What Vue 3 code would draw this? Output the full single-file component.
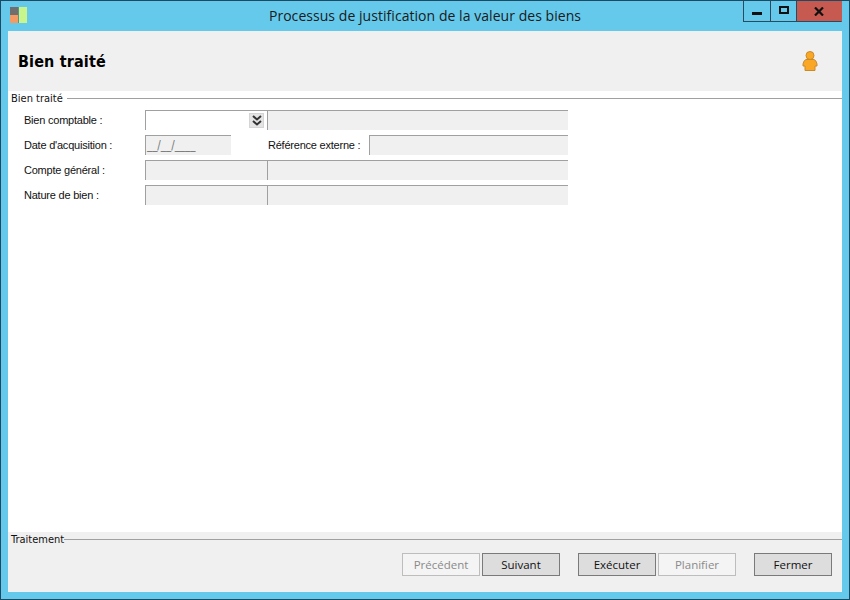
<script setup>
const rows = [
  { label: 'Bien comptable :', key: 'a' },
  { label: "Date d'acquisition :", key: 'b' },
  { label: 'Compte général :', key: 'c' },
  { label: 'Nature de bien :', key: 'd' }
]
</script>

<template>
  <div class="win">
    <div class="titlebar">
      <svg class="appicon" width="17" height="17" viewBox="0 0 17 17">
        <rect x="0" y="0" width="8" height="8" fill="#6f6f6f" />
        <rect x="0" y="8" width="8" height="8" fill="#f59a63" />
        <rect x="8" y="0" width="1" height="16" fill="#5f8f8f" />
        <rect x="9" y="0" width="8" height="16" fill="#c8f58c" />
      </svg>
      <div class="title">Processus de justification de la valeur des biens</div>
      <div class="controls">
        <div class="ctl min"><span class="minbar"></span></div>
        <div class="ctl max"><span class="maxbox"></span></div>
        <div class="ctl close">
          <svg width="10" height="9" viewBox="0 0 10 9"><path d="M1 0.5 L9 8.5 M9 0.5 L1 8.5" stroke="#111" stroke-width="2.2" fill="none" /></svg>
        </div>
      </div>
    </div>
    <div class="client">
      <div class="header">
        <h1>Bien traité</h1>
        <svg class="user" width="18" height="22" viewBox="0 0 18 22">
          <circle cx="9" cy="5.5" r="4" fill="#fba726" stroke="#c98a2a" stroke-width="1" />
          <path d="M5 9.5 H13 Q15.5 10.5 16 14 V16 H14 V20.5 H4 V16 H2 V14 Q2.5 10.5 5 9.5 Z" fill="#fba726" stroke="#c98a2a" stroke-width="1" />
        </svg>
      </div>
      <div class="main">
        <div class="legend"><span>Bien traité</span><i></i></div>
        <div class="form">
          <div class="row">
            <label>{{ rows[0].label }}</label>
            <div class="combo">
              <button class="drop" type="button">
                <svg width="10" height="11" viewBox="0 0 10 11"><path d="M1 1 L5 4.5 L9 1 M1 6 L5 9.5 L9 6" stroke="#333" stroke-width="2" fill="none" /></svg>
              </button>
            </div>
            <div class="field wide"></div>
          </div>
          <div class="row">
            <label>{{ rows[1].label }}</label>
            <div class="field date">__/__/____</div>
            <span class="ref">Référence externe :</span>
            <div class="field refv"></div>
          </div>
          <div class="row">
            <label>{{ rows[2].label }}</label>
            <div class="field short"></div>
            <div class="field wide"></div>
          </div>
          <div class="row">
            <label>{{ rows[3].label }}</label>
            <div class="field short"></div>
            <div class="field wide"></div>
          </div>
        </div>
      </div>
      <div class="footer">
        <div class="legend flegend"><span>Traitement</span><i></i></div>
        <div class="buttons">
          <button type="button" class="btn off">Précédent</button>
          <button type="button" class="btn">Suivant</button>
          <button type="button" class="btn gap">Exécuter</button>
          <button type="button" class="btn off">Planifier</button>
          <button type="button" class="btn gap">Fermer</button>
        </div>
      </div>
    </div>
  </div>
</template>

<style>
html, body { margin: 0; background: #65c9ec; }
</style>

<style scoped>
.win {
  width: 850px;
  height: 600px;
  box-sizing: border-box;
  border: 1px solid #1d4a62;
  background: #65c9ec;
  display: flex;
  flex-direction: column;
  font-family: "DejaVu Sans Condensed", "DejaVu Sans", sans-serif;
  color: #111;
  overflow: hidden;
}
.titlebar {
  height: 30px;
  flex: none;
  display: flex;
  position: relative;
  padding: 0 7px 0 9px;
}
.appicon { margin-top: 6px; flex: none; }
.title {
  position: absolute;
  left: 0;
  right: 0;
  top: 5px;
  text-align: center;
  font: 14px/19px "Open Sans", sans-serif;
  letter-spacing: 0.05px;
  color: #1a1a1a;
}
.controls {
  margin-left: auto;
  display: flex;
  height: 21px;
  position: relative;
}
.ctl {
  box-sizing: border-box;
  height: 21px;
  border: 1px solid #2a4a5e;
  border-top: 0;
  display: flex;
  align-items: center;
  justify-content: center;
}
.min { width: 28px; }
.max { width: 26px; border-left: 0; }
.close { width: 45px; border-left: 0; background: #c75a50; border-right-color: #c75a50; }
.minbar { width: 10px; height: 3px; background: #111; margin-top: 5px; }
.maxbox { box-sizing: border-box; width: 10px; height: 8px; border: 2px solid #111; margin-top: -2px; }
.client {
  margin: 0 7px;
  height: 561px;
  flex: none;
  display: flex;
  flex-direction: column;
  background: #fff;
}
.header {
  height: 60px;
  flex: none;
  background: #f0f0f0;
  display: flex;
  align-items: center;
  justify-content: space-between;
  padding: 0 23px 0 10px;
}
h1 {
  margin: 1px 0 0;
  font: bold 16px/20px "DejaVu Sans Condensed", "DejaVu Sans", sans-serif;
  color: #000;
  letter-spacing: 0.15px;
}
.user { margin-top: -1px; }
.main { flex: 1; min-height: 0; }
.legend {
  display: flex;
  align-items: center;
  height: 15px;
  padding-left: 3px;
  font-size: 11px;
}
.legend span { flex: none; }
.legend i {
  flex: 1;
  height: 1px;
  background: #a0a0a0;
  margin-left: 4px;
}
.form {
  padding: 4px 0 0 16px;
  display: flex;
  flex-direction: column;
  gap: 5px;
}
.row {
  display: flex;
  height: 20px;
  align-items: stretch;
}
.row label {
  width: 121px;
  flex: none;
  font: 11px/21px "Liberation Sans", sans-serif;
  letter-spacing: -0.22px;
}
.field, .combo {
  box-sizing: border-box;
  border-top: 1px solid #a0a0a0;
  border-left: 1px solid #a0a0a0;
  background: #f0f0f0;
}
.combo {
  width: 122px;
  background: #fff;
  display: flex;
  justify-content: flex-end;
  align-items: center;
  padding-right: 3px;
}
.drop {
  width: 15px;
  height: 15px;
  padding: 0;
  border: 1px solid #d5d5d5;
  background: #e4e4e4;
  display: flex;
  align-items: center;
  justify-content: center;
}
.wide { width: 301px; }
.short { width: 122px; }
.date {
  width: 86px;
  font: 11.5px/19px "DejaVu Sans Condensed", "DejaVu Sans", sans-serif;
  color: #777;
  padding-left: 1px;
}
.ref {
  width: 101px;
  margin-left: 37px;
  flex: none;
  font: 11px/21px "Liberation Sans", sans-serif;
  letter-spacing: -0.22px;
}
.refv { width: 199px; }
.footer {
  height: 60px;
  flex: none;
  background: #f0f0f0;
}
.flegend { height: 14px; }
.flegend i { margin-left: 0; }
.buttons {
  display: flex;
  justify-content: flex-end;
  gap: 2px;
  padding: 7px 10px 0 0;
}
.btn {
  width: 78px;
  height: 23px;
  box-sizing: border-box;
  padding: 0;
  border: 1px solid #7a7a7a;
  background: #dddddd;
  color: #111;
  font: 11.5px "Open Sans", sans-serif;
}
.btn.off {
  border-color: #bdbdbd;
  background: #f4f4f4;
  color: #8a8a8a;
}
.btn.gap { margin-left: 16px; }
</style>
